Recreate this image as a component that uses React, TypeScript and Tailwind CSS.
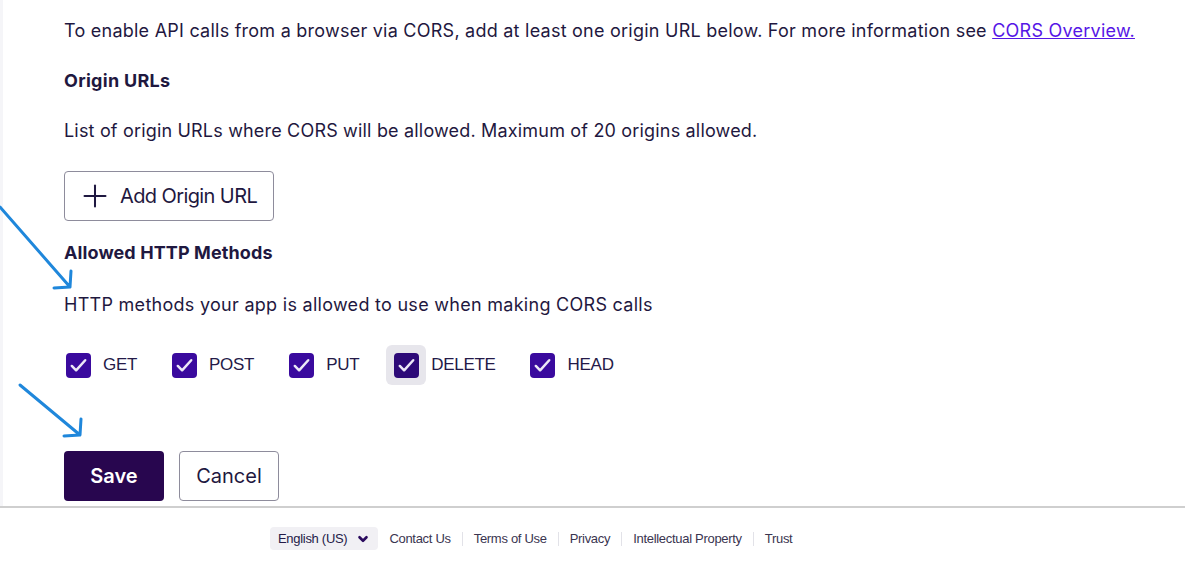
import { Plus, ChevronDown } from "lucide-react";

const methods = ["GET", "POST", "PUT", "DELETE", "HEAD"];

function Check({ label, focused }: { label: string; focused?: boolean }) {
  return (
    <label className="flex items-center gap-[5px]">
      <span
        className={
          "flex size-[40px] items-center justify-center rounded-[6px] " +
          (focused ? "bg-[#e7e6ec]" : "")
        }
      >
        <span
          className={
            "flex size-[25px] items-center justify-center rounded-[4px] " +
            (focused ? "bg-[#2d0a78]" : "bg-[#3a0a9e]")
          }
        >
          <svg viewBox="0 0 24 24" className="size-[23px]" fill="none">
            <path
              d="M5 12.5l4.5 4.5L19 6.5"
              stroke="#ece8f7"
              strokeWidth="2.6"
              strokeLinecap="round"
              strokeLinejoin="round"
            />
          </svg>
        </span>
      </span>
      <span className="font-['Liberation_Sans',sans-serif] text-[17px] tracking-[-0.3px] text-[#241a48]">
        {label}
      </span>
    </label>
  );
}

function Arrow({ x1, y1, x2, y2 }: { x1: number; y1: number; x2: number; y2: number }) {
  return (
    <path
      d={`M${x1} ${y1} L${x2} ${y2} M${x2 - 16} ${y2 + 1} L${x2} ${y2} L${x2 + 1} ${y2 - 16}`}
      stroke="#1f87db"
      strokeWidth="3"
      strokeLinecap="round"
      strokeLinejoin="round"
      fill="none"
    />
  );
}

export default function App() {
  return (
    <div className="relative h-[567px] w-[1185px] overflow-hidden bg-white font-['Inter',sans-serif] text-[#1f1840]">
      <div className="flex h-[506px]">
        <div className="w-[3px] bg-[#f5f5f8]" />
        <div className="pl-[61px] pt-[19px]">
          <p className="text-[18px] leading-[24px] tracking-[0.24px]">
            To enable API calls from a browser via CORS, add at least one origin URL below. For more
            information see{" "}
            <a href="#" className="text-[#5616e6] underline">
              CORS Overview.
            </a>
          </p>
          <h3 className="mt-[26px] text-[18px] font-bold leading-[24px] tracking-[0.3px]">
            Origin URLs
          </h3>
          <p className="mt-[26px] text-[18px] leading-[24px] tracking-[0.18px]">
            List of origin URLs where CORS will be allowed. Maximum of 20 origins allowed.
          </p>
          <button className="mt-[28px] flex h-[50px] w-[210px] items-center gap-[7px] rounded-[4px] border border-[#8e8c9c] pl-[12px] text-[20px] tracking-[-0.6px]">
            <Plus className="size-[36px]" strokeWidth={1.35} />
            Add Origin URL
          </button>
          <h3 className="mt-[20px] text-[18px] font-bold leading-[24px] tracking-[0.1px]">
            Allowed HTTP Methods
          </h3>
          <p className="mt-[28px] text-[18px] leading-[24px] tracking-[0.28px]">
            HTTP methods your app is allowed to use when making CORS calls
          </p>
          <div className="mt-[28px] -ml-[6px] flex items-center gap-[27px]">
            {methods.map((m) => (
              <Check key={m} label={m} focused={m === "DELETE"} />
            ))}
          </div>
          <div className="mt-[66px] flex gap-[15px]">
            <button className="h-[50px] w-[100px] rounded-[4px] bg-[#28064f] text-[20px] font-semibold text-white">
              Save
            </button>
            <button className="h-[50px] w-[100px] rounded-[4px] border border-[#8e8c9c] text-[20px]">
              Cancel
            </button>
          </div>
        </div>
      </div>
      <footer className="border-t-2 border-[#cfcfcf] pt-[19px]">
        <div className="flex items-center pl-[270px] font-['Liberation_Sans',sans-serif] text-[13px] tracking-[-0.3px] text-[#3a3550]">
          <span className="flex h-[23px] items-center gap-[9px] rounded-[4px] bg-[#f1f0f4] px-[8px] text-[#241a48]">
            English (US)
            <ChevronDown className="size-[14px] text-[#2a0a5e]" strokeWidth={4.5} />
          </span>
          {["Contact Us", "Terms of Use", "Privacy", "Intellectual Property", "Trust"].map((l, i) => (
            <span key={l} className="flex items-center">
              {i > 0 && <span className="mx-[11px] h-[14px] w-px bg-[#e2e2e8]" />}
              <span className={i === 0 ? "ml-[11px]" : ""}>{l}</span>
            </span>
          ))}
        </div>
      </footer>
      <svg className="pointer-events-none absolute left-0 top-0" width="1185" height="567">
        <Arrow x1={0} y1={207} x2={70} y2={287} />
        <Arrow x1={20} y1={385} x2={80} y2={435} />
      </svg>
    </div>
  );
}
